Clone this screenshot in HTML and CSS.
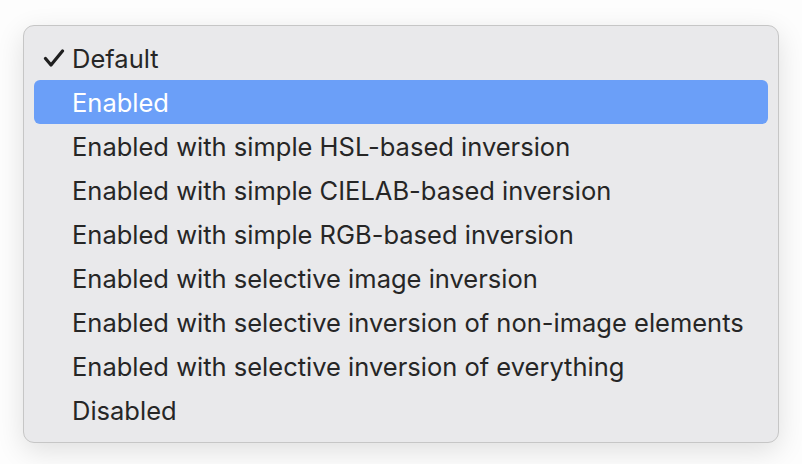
FILE: index.html
```html
<!DOCTYPE html>
<html>
<head>
<meta charset="utf-8">
<link rel="stylesheet" href="styles.css">
</head>
<body>
<div class="menu">
  <div class="item"><span class="check"><svg width="22" height="20" viewBox="0 0 22 20"><path d="M2.5 9.5 L8 16 L19.5 2" fill="none" stroke="#1f1f1f" stroke-width="3.2" stroke-linecap="round" stroke-linejoin="round"/></svg></span><span class="label">Default</span></div>
  <div class="item active"><span class="check"></span><span class="label">Enabled</span></div>
  <div class="item"><span class="check"></span><span class="label">Enabled with simple HSL-based inversion</span></div>
  <div class="item"><span class="check"></span><span class="label">Enabled with simple CIELAB-based inversion</span></div>
  <div class="item"><span class="check"></span><span class="label">Enabled with simple RGB-based inversion</span></div>
  <div class="item"><span class="check"></span><span class="label">Enabled with selective image inversion</span></div>
  <div class="item"><span class="check"></span><span class="label">Enabled with selective inversion of non-image elements</span></div>
  <div class="item"><span class="check"></span><span class="label">Enabled with selective inversion of everything</span></div>
  <div class="item"><span class="check"></span><span class="label">Disabled</span></div>
</div>
</body>
</html>
```
FILE: styles.css
```css
html, body {
  margin: 0;
  padding: 0;
  background: #fdfdfd;
  width: 802px;
  height: 464px;
  overflow: hidden;
}
body {
  padding: 25px 0 0 23px;
  box-sizing: border-box;
  font-family: Inter, "Noto Sans", sans-serif;
}
.menu {
  width: 756px;
  height: 418px;
  box-sizing: border-box;
  background: #e9e9eb;
  border: 1px solid #c6c6c6;
  border-radius: 11px;
  box-shadow: 0 8px 28px rgba(0,0,0,0.12);
  padding: 10px;
  display: flex;
  flex-direction: column;
}
.item {
  height: 44px;
  display: flex;
  align-items: center;
  border-radius: 6px;
  color: #262626;
  font-size: 25.5px;
}
.item.active {
  background: #6b9ff8;
  color: #ffffff;
}
.check {
  width: 38px;
  display: flex;
  justify-content: flex-end;
}
.check svg { display: block; margin-right: 7px; margin-top: 1px; }
.label { line-height: 1; padding-top: 2px; }
```
